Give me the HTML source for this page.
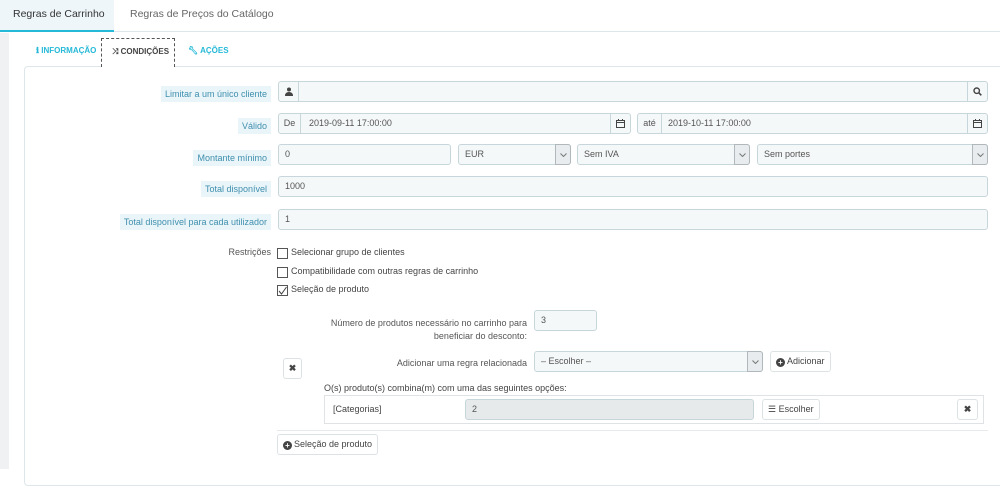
<!DOCTYPE html>
<html><head><meta charset="utf-8"><style>
*{box-sizing:border-box;margin:0;padding:0}
body{width:1000px;height:469px;overflow:hidden;background:#fff;font-family:"Liberation Sans",sans-serif;font-size:9px;color:#555;position:relative}
.a{position:absolute;white-space:nowrap}
.inp{position:absolute;background:#f5f8f9;border:1px solid #c7d6db;border-radius:3px;height:21px;line-height:19px;padding-left:6px;color:#555;font-size:9px;white-space:nowrap}
.lbl{position:absolute;right:729px;background:#eaf5f9;color:#3f8fae;padding:2px 4px;font-size:9px;line-height:12px;white-space:nowrap}
.addon{position:absolute;top:0;bottom:0;border-left:1px solid #c7d6db;width:20px;text-align:center;display:flex;align-items:center;justify-content:center}
.sel{position:absolute;top:-1px;right:-1px;bottom:-1px;width:16px;background:#e8ecee;border:1px solid #b0b8bc;border-radius:0 3px 3px 0;display:flex;align-items:center;justify-content:center}
.btn{position:absolute;background:#fff;border:1px solid #dde3e5;border-radius:3px;height:21px;line-height:19px;padding:0 5px;font-size:9px;color:#444;white-space:nowrap}
.cb{position:absolute;width:11px;height:11px;border:1px solid #555;background:#fff}
.cbt{position:absolute;font-size:9px;color:#444;white-space:nowrap}
.plus{display:inline-block;width:9px;height:9px;border-radius:50%;background:#444;color:#fff;font-size:8px;line-height:9px;text-align:center;font-weight:bold;vertical-align:-1px;margin-right:2px}
</style></head><body>
<div class="a" style="left:0;top:0;width:1000px;height:32px;border-bottom:1px solid #dfe6e9"></div>
<div class="a" style="left:0;top:0;width:114px;height:32px;background:#eef6f9;border-bottom:2px solid #25b9d7;font-size:10.5px;color:#333;line-height:28px;padding-left:13px">Regras de Carrinho</div>
<div class="a" style="left:130px;top:0;line-height:28px;font-size:10.5px;color:#666">Regras de Preços do Catálogo</div>
<div class="a" style="left:0;top:33px;width:9px;height:436px;background:#eff1f2"></div>
<div class="a" style="left:36px;top:46px;color:#25b9d7;font-size:8px;font-weight:bold">ℹ INFORMAÇÃO</div>
<div class="a" style="left:101px;top:38px;width:74px;height:29px;border:1px dashed #555;border-bottom:none;background:#fff;z-index:2;font-size:8px;font-weight:bold;color:#444;line-height:26px;padding-left:10px">⤨ CONDIÇÕES</div>
<div class="a" style="left:188px;top:46px;color:#25b9d7;font-size:8px;font-weight:bold">🔧︎ AÇÕES</div>
<div class="a" style="left:24px;top:66px;width:990px;height:420px;border:1px solid #dfe6e9;border-radius:4px"></div>

<div class="lbl" style="top:86px">Limitar a um único cliente</div>
<div class="inp" style="left:278px;top:81px;width:710px;padding:0"><div class="addon" style="left:0;border:none;border-right:1px solid #c7d6db"><svg width="8" height="9" viewBox="0 0 8 9"><circle cx="4" cy="2.5" r="2" fill="#444"/><path d="M0 9 Q0 5 4 5 Q8 5 8 9Z" fill="#444"/></svg></div><div class="addon" style="right:0"><svg width="9" height="9" viewBox="0 0 9 9"><circle cx="3.7" cy="3.7" r="2.7" fill="none" stroke="#444" stroke-width="1.4"/><path d="M5.7 5.7L8.3 8.3" stroke="#444" stroke-width="1.6"/></svg></div></div>

<div class="lbl" style="top:118px">Válido</div>
<div class="inp" style="left:278px;top:113px;width:353px;padding:0"><div class="addon" style="left:0;border:none;border-right:1px solid #c7d6db;width:22px">De</div><span class="a" style="left:30px">2019-09-11 17:00:00</span><div class="addon" style="right:0"><svg width="9" height="9" viewBox="0 0 9 9"><rect x="0.5" y="1.5" width="8" height="7" fill="none" stroke="#444"/><path d="M0.5 3.5H8.5M2.5 0V2M6.5 0V2" stroke="#444"/></svg></div></div>
<div class="inp" style="left:637px;top:113px;width:351px;padding:0"><div class="addon" style="left:0;border:none;border-right:1px solid #c7d6db;width:24px">até</div><span class="a" style="left:30px">2019-10-11 17:00:00</span><div class="addon" style="right:0"><svg width="9" height="9" viewBox="0 0 9 9"><rect x="0.5" y="1.5" width="8" height="7" fill="none" stroke="#444"/><path d="M0.5 3.5H8.5M2.5 0V2M6.5 0V2" stroke="#444"/></svg></div></div>

<div class="lbl" style="top:150px">Montante mínimo</div>
<div class="inp" style="left:278px;top:144px;width:173px">0</div>
<div class="inp" style="left:458px;top:144px;width:113px">EUR<div class="sel"><svg width="7" height="4"><path d="M0.5 0.5L3.5 3.5L6.5 0.5" fill="none" stroke="#777"/></svg></div></div>
<div class="inp" style="left:577px;top:144px;width:173px">Sem IVA<div class="sel"><svg width="7" height="4"><path d="M0.5 0.5L3.5 3.5L6.5 0.5" fill="none" stroke="#777"/></svg></div></div>
<div class="inp" style="left:757px;top:144px;width:231px">Sem portes<div class="sel"><svg width="7" height="4"><path d="M0.5 0.5L3.5 3.5L6.5 0.5" fill="none" stroke="#777"/></svg></div></div>

<div class="lbl" style="top:181px">Total disponível</div>
<div class="inp" style="left:278px;top:176px;width:710px">1000</div>
<div class="lbl" style="top:214px">Total disponível para cada utilizador</div>
<div class="inp" style="left:278px;top:209px;width:710px">1</div>

<div class="a" style="right:729px;top:247px;color:#555">Restrições</div>
<div class="cb" style="left:277px;top:248px"></div><div class="cbt" style="left:291px;top:247px">Selecionar grupo de clientes</div>
<div class="cb" style="left:277px;top:267px"></div><div class="cbt" style="left:291px;top:266px">Compatibilidade com outras regras de carrinho</div>
<div class="cb" style="left:277px;top:285px"><svg width="9" height="9" style="position:absolute;left:0;top:0"><path d="M1 5L3.5 8L8.5 1" fill="none" stroke="#444"/></svg></div><div class="cbt" style="left:291px;top:284px">Seleção de produto</div>

<div class="a" style="right:473px;top:317px;text-align:right;line-height:13px;color:#555">Número de produtos necessário no carrinho para<br>beneficiar do desconto:</div>
<div class="inp" style="left:534px;top:310px;width:63px">3</div>

<div class="btn" style="left:283px;top:358px;width:19px;font-weight:bold;padding:0;text-align:center">✖</div>
<div class="a" style="right:473px;top:358px;color:#555">Adicionar uma regra relacionada</div>
<div class="inp" style="left:534px;top:351px;width:229px">– Escolher –<div class="sel"><svg width="7" height="4"><path d="M0.5 0.5L3.5 3.5L6.5 0.5" fill="none" stroke="#777"/></svg></div></div>
<div class="btn" style="left:770px;top:351px"><span class="plus">+</span>Adicionar</div>

<div class="a" style="left:324px;top:383px;color:#444">O(s) produto(s) combina(m) com uma das seguintes opções:</div>
<div class="a" style="left:324px;top:395px;width:660px;height:29px;border:1px solid #dfe3e5"></div>
<div class="a" style="left:333px;top:404px;color:#444">[Categorias]</div>
<div class="inp" style="left:465px;top:399px;width:289px;background:#e7eaeb">2</div>
<div class="btn" style="left:762px;top:399px">☰ Escolher</div>
<div class="btn" style="left:957px;top:399px;width:21px;padding:0;text-align:center;font-weight:bold">✖</div>
<div class="a" style="left:277px;top:430px;width:711px;height:1px;background:#e6eaec"></div>
<div class="btn" style="left:277px;top:434px"><span class="plus">+</span>Seleção de produto</div>
</body></html>
